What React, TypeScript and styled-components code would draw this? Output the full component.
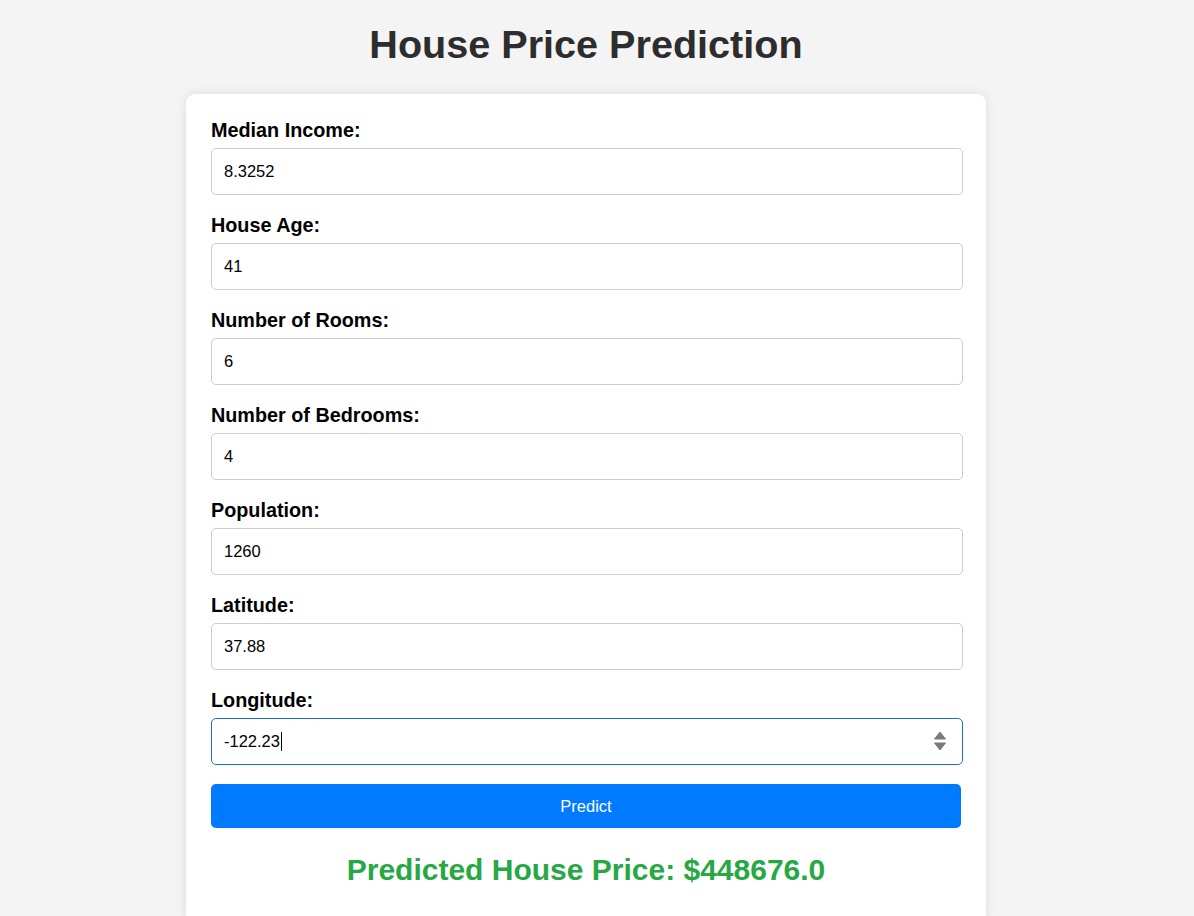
import React from "react";
import styled, { createGlobalStyle } from "styled-components";

const GlobalStyle = createGlobalStyle`
  html, body {
    margin: 0;
    padding: 0;
    background: #f4f4f4;
    font-family: "Liberation Sans", Arial, sans-serif;
  }
`;

const Page = styled.div`
  min-height: 916px;
  background: #f4f4f4;
  padding: 21px 22px 0 0;
  box-sizing: border-box;
`;

const Title = styled.h1`
  margin: 0 0 27px;
  text-align: center;
  font-size: 39.6px;
  line-height: 46px;
  font-weight: 700;
  color: #2d2d2d;
`;

const Card = styled.form`
  width: 800px;
  margin: 0 auto;
  background: #ffffff;
  border-radius: 9px;
  box-shadow: 0 0 11px rgba(0, 0, 0, 0.1);
  padding: 25px 25px 40px;
  box-sizing: border-box;
  display: flex;
  flex-direction: column;
`;

const Label = styled.label`
  display: block;
  font-size: 19.8px;
  line-height: 23px;
  font-weight: 700;
  color: #000;
  margin-bottom: 6px;
`;

const InputWrap = styled.div`
  position: relative;
  width: 752px;
  margin-bottom: 19px;
`;

const Input = styled.input<{ $active?: boolean }>`
  display: block;
  width: 100%;
  height: 47px;
  box-sizing: border-box;
  padding: 0 12px 1px;
  border: 1px solid ${(p) => (p.$active ? "#1a6fd6" : "#cccccc")};
  border-radius: 5px;
  font-family: "Liberation Sans", Arial, sans-serif;
  font-size: 16.5px;
  color: #000;
  background: #fff;
  outline: none;
`;

const Spinner = styled.svg`
  position: absolute;
  right: 17px;
  top: 13px;
  width: 12px;
  height: 20px;
`;

const Caret = styled.span`
  position: absolute;
  left: 70px;
  top: 14px;
  width: 1px;
  height: 19px;
  background: #000;
`;

const Button = styled.button`
  width: 750px;
  height: 44px;
  border: none;
  border-radius: 5px;
  background: #007bff;
  color: #fff;
  font-family: "Liberation Sans", Arial, sans-serif;
  font-size: 16.5px;
  cursor: pointer;
`;

const Result = styled.h2`
  margin: 24px 0 0;
  text-align: center;
  font-size: 30px;
  line-height: 35px;
  font-weight: 700;
  color: #28a745;
`;

const fields = [
  { label: "Median Income:", value: "8.3252" },
  { label: "House Age:", value: "41" },
  { label: "Number of Rooms:", value: "6" },
  { label: "Number of Bedrooms:", value: "4" },
  { label: "Population:", value: "1260" },
  { label: "Latitude:", value: "37.88" },
  { label: "Longitude:", value: "-122.23", active: true },
];

export default function App() {
  return (
    <>
      <GlobalStyle />
      <Page>
        <Title>House Price Prediction</Title>
        <Card onSubmit={(e) => e.preventDefault()}>
          {fields.map((f) => (
            <React.Fragment key={f.label}>
              <Label>{f.label}</Label>
              <InputWrap>
                <Input type="text" defaultValue={f.value} $active={f.active} />
                {f.active && (
                  <>
                    <Caret />
                    <Spinner viewBox="0 0 12 20">
                      <path d="M6 1 L11.5 8 L0.5 8 Z" fill="#7a7a7a" stroke="#7a7a7a" strokeWidth="1" strokeLinejoin="round" />
                      <path d="M6 19 L11.5 12 L0.5 12 Z" fill="#7a7a7a" stroke="#7a7a7a" strokeWidth="1" strokeLinejoin="round" />
                    </Spinner>
                  </>
                )}
              </InputWrap>
            </React.Fragment>
          ))}
          <Button type="submit">Predict</Button>
          <Result>Predicted House Price: $448676.0</Result>
        </Card>
      </Page>
    </>
  );
}
